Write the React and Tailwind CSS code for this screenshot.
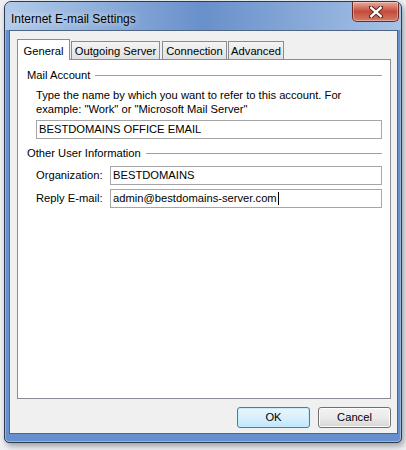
import React from 'react';

const font = { fontFamily: '"Liberation Sans", Arial, sans-serif' };

const TextBox = ({ value, caret, className = '' }) => (
    <div className={`h-[19px] border border-[#a6a6a6] bg-white flex items-center pl-[2px] text-[11.2px] text-black whitespace-nowrap ${className}`}>
        <span className="leading-none">{value}</span>
        {caret && <span className="w-px h-[13px] bg-black ml-px" />}
    </div>
);

const GroupTitle = ({ children }) => (
    <div className="flex items-center gap-[5px] h-[15px]">
        <span className="text-[11.2px] text-black whitespace-nowrap">{children}</span>
        <div className="flex-1 h-px bg-[#a0a0a0]" />
    </div>
);

const CloseButton = () => (
    <div className="w-[47px] h-[20px] rounded-b-[5px] border border-t-0 border-[#6d2a22] bg-gradient-to-b from-[#e9a99b] via-[#c54a3b] to-[#d17c66] flex items-center justify-center shadow-[inset_0_0_0_1px_rgba(255,255,255,0.35)]">
        <svg width="14" height="12" viewBox="0 0 14 12">
            <path d="M2 1.5 L12 10.5 M12 1.5 L2 10.5" stroke="#4a1d18" strokeWidth="4.2" strokeLinecap="square" />
            <path d="M2.3 1.8 L11.7 10.2 M11.7 1.8 L2.3 10.2" stroke="#ffffff" strokeWidth="2.4" strokeLinecap="square" />
        </svg>
    </div>
);

const Tab = ({ label, width, active }) =>
    active ? (
        <div
            className={`${width} h-[21px] -mb-px relative z-10 bg-white border border-b-0 border-[#898c95] flex items-start justify-center pt-[3px] text-[11.2px] text-black whitespace-nowrap`}
        >
            {label}
        </div>
    ) : (
        <div
            className={`${width} h-[18px] bg-gradient-to-b from-[#f4f4f4] to-[#e1e1e1] border border-b-0 border-[#898c95] flex items-center justify-center pt-[1px] text-[11.2px] text-black whitespace-nowrap`}
        >
            {label}
        </div>
    );

export default function App() {
    return (
        <div className="w-[406px] h-[450px] bg-[#eef0f3] pl-[4px] pt-[1px] overflow-hidden" style={font}>
            <div className="w-[398px] h-[442px] rounded-t-[7px] rounded-b-[5px] border border-[#2e3b4e] bg-[#6590cd] flex flex-col overflow-hidden shadow-[2px_3px_6px_rgba(0,0,0,0.35),inset_0_0_0_1px_rgba(255,255,255,0.35)]">
                <div className="h-[28px] flex items-start justify-between bg-gradient-to-r from-[#b3cbea] via-[#6890ca] to-[#a7c2e6]">
                    <span className="pl-[6px] pt-[8px] text-[12px] text-black [text-shadow:0_0_6px_rgba(255,255,255,0.9)]">
                        Internet E-mail Settings
                    </span>
                    <div className="mr-[2px]">
                        <CloseButton />
                    </div>
                </div>
                <div className="ml-[4px] mr-[3px] mb-[8px] flex-1 border border-[#4f6584] bg-[#f0f0f0] flex flex-col pt-[8px] pl-[7px] pr-[6px] pb-[5px]">
                    <div className="flex items-end h-[20px] gap-[1px]">
                        <Tab label="General" width="w-[53px]" active />
                        <Tab label="Outgoing Server" width="w-[89px]" />
                        <Tab label="Connection" width="w-[65px] ml-px" />
                        <Tab label="Advanced" width="w-[56px]" />
                    </div>
                    <div className="flex-1 bg-white border border-[#898c95] pl-[9px] pr-[8px] pt-[8px]">
                        <GroupTitle>Mail Account</GroupTitle>
                        <div className="pl-[9px] mt-[5px]">
                            <p className="text-[11.2px] leading-[14px] text-black">
                                Type the name by which you want to refer to this account. For
                                <br />
                                example: "Work" or "Microsoft Mail Server"
                            </p>
                            <TextBox value="BESTDOMAINS OFFICE EMAIL" className="mt-[4px]" />
                        </div>
                        <div className="mt-[7px]">
                            <GroupTitle>Other User Information</GroupTitle>
                        </div>
                        <div className="pl-[9px] mt-[5px] flex flex-col gap-[4px]">
                            <div className="flex items-center">
                                <span className="w-[74px] text-[11.2px] text-black">Organization:</span>
                                <TextBox value="BESTDOMAINS" className="flex-1" />
                            </div>
                            <div className="flex items-center">
                                <span className="w-[74px] text-[11.2px] text-black">Reply E-mail:</span>
                                <TextBox value="admin@bestdomains-server.com" caret className="flex-1" />
                            </div>
                        </div>
                    </div>
                    <div className="h-[21px] mt-[8px] flex justify-end gap-[8px]">
                        <button className="w-[73px] h-[21px] rounded-[3px] border border-[#3c7fb1] bg-gradient-to-b from-[#eaf6fd] via-[#d9f0fc] to-[#bee6fd] text-[11.2px] text-black shadow-[inset_0_0_0_1px_#c6ecfc]">
                            OK
                        </button>
                        <button className="w-[73px] h-[21px] rounded-[3px] border border-[#707070] bg-gradient-to-b from-[#f2f2f2] via-[#ebebeb] to-[#d6d6d6] text-[11.2px] text-black shadow-[inset_0_0_0_1px_#fcfcfc]">
                            Cancel
                        </button>
                    </div>
                </div>
            </div>
        </div>
    );
}
